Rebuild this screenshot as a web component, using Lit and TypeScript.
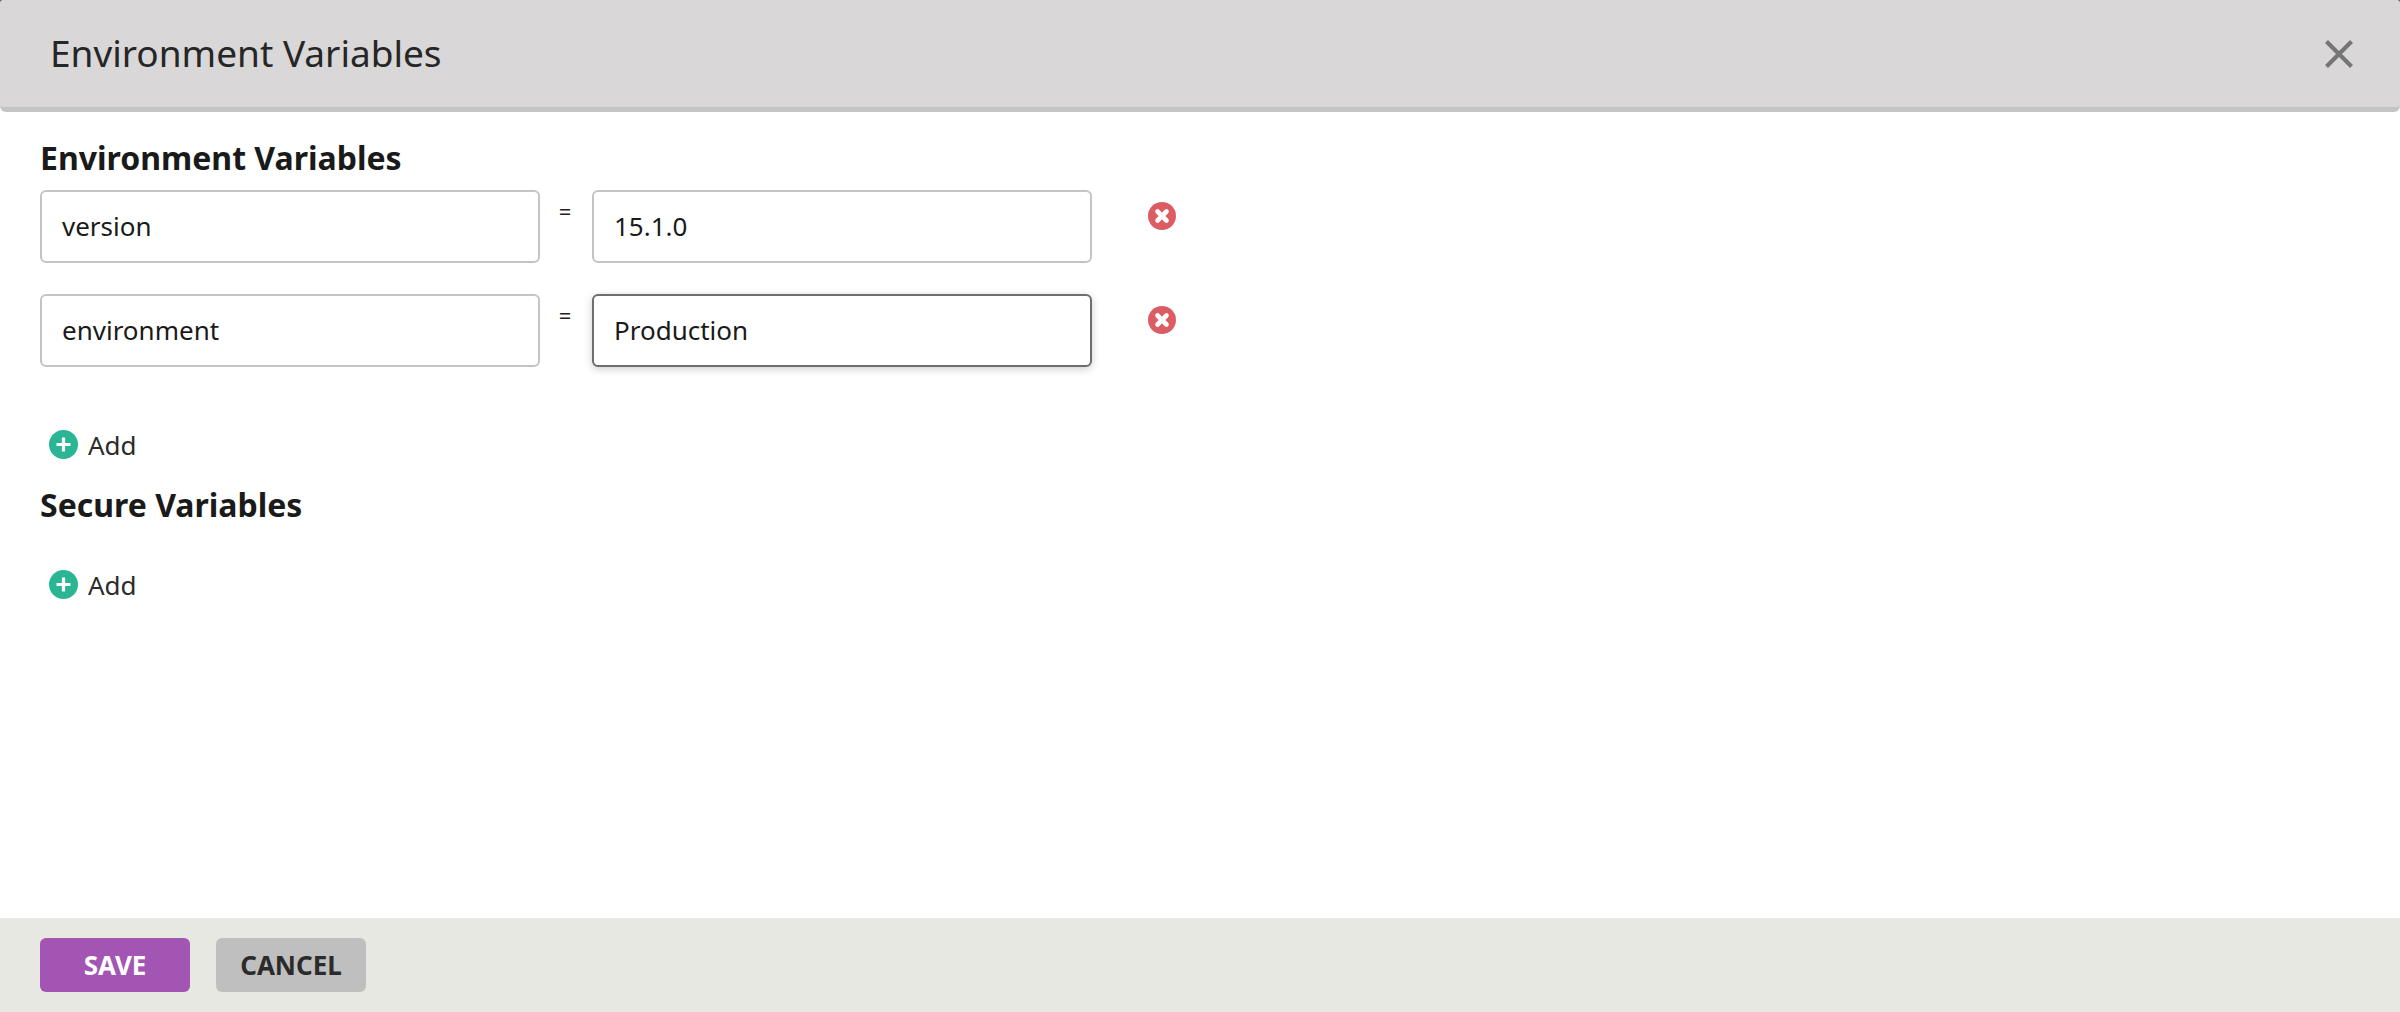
import { LitElement, html, css, svg } from "lit";
import { customElement } from "lit/decorators.js";

const closeIcon = svg`<svg class="close" viewBox="0 0 30 30" width="30" height="30"><path d="M2.5 2.5 L27.5 27.5 M27.5 2.5 L2.5 27.5" stroke="#757575" stroke-width="4.2" fill="none"/></svg>`;
const delIcon = svg`<svg class="del" viewBox="0 0 28 28" width="28" height="28"><circle cx="14" cy="14" r="14" fill="#dc5c63"/><path d="M9.5 9.5 L18.5 18.5 M18.5 9.5 L9.5 18.5" stroke="#fff" stroke-width="4.6" stroke-linecap="round" fill="none"/></svg>`;
const addIcon = svg`<svg viewBox="0 0 29 29" width="29" height="29"><circle cx="14.5" cy="14.5" r="14.5" fill="#2ab595"/><path d="M14.5 7.5 V21.5 M7.5 14.5 H21.5" stroke="#fff" stroke-width="3.2" fill="none"/></svg>`;

@customElement("app-root")
export class AppRoot extends LitElement {
  static styles = css`
    :host {
      display: flex;
      flex-direction: column;
      height: 1012px;
      background: #fff;
      font-family: "Noto Sans", "Open Sans", sans-serif;
      color: #1e1e1e;
    }
    .top {
      flex: none;
      background: linear-gradient(#555 50%, #fff 50%);
    }
    .header {
      box-sizing: border-box;
      height: 112px;
      display: flex;
      align-items: center;
      justify-content: space-between;
      padding: 1px 46px 0 50px;
      background: #d9d7d8;
      border-bottom: 5px solid #c4c4c4;
      border-radius: 3px 3px 6px 6px;
    }
    .title { font-size: 37px; font-weight: 400; color: #262626; margin: 0 0 3px; }
    .close { display: block; }
    .body {
      flex: 1;
      display: flex;
      flex-direction: column;
      padding: 25px 40px 0;
    }
    h2 {
      margin: 0;
      font-size: 32px;
      line-height: 42px;
      font-weight: 700;
      color: #1a1a1a;
    }
    .rows { display: flex; flex-direction: column; gap: 31px; margin-top: 11px; }
    .row { display: flex; align-items: flex-start; }
    .field {
      box-sizing: border-box;
      width: 500px;
      height: 73px;
      display: flex;
      align-items: center;
      padding: 0 20px 2px;
      border: 2px solid #c4c4c4;
      border-radius: 6px;
      font-size: 26px;
      color: #1a1a1a;
      background: #fff;
    }
    .field.focus {
      border-color: #6e6e6e;
      box-shadow: 0 2px 8px rgba(0, 0, 0, 0.2);
    }
    .eq {
      box-sizing: border-box;
      width: 52px;
      padding-right: 2px;
      text-align: center;
      font-size: 22px;
      line-height: 28px;
      margin-top: 7px;
      color: #222;
    }
    .del { margin: 12px 0 0 56px; display: block; }
    .add {
      display: flex;
      align-items: center;
      gap: 10px;
      padding-left: 9px;
      font-size: 26px;
      color: #2b2b2b;
      line-height: 36px;
    }
    .add svg { display: block; margin-top: -2px; }
    .add.first { margin-top: 60px; }
    .secure { margin-top: 21px; }
    .add.second { margin-top: 41px; }
    .footer {
      box-sizing: border-box;
      height: 94px;
      flex: none;
      display: flex;
      gap: 26px;
      padding: 20px 40px 0;
      background: #e8e8e3;
    }
    .btn {
      width: 150px;
      height: 54px;
      display: flex;
      align-items: center;
      justify-content: center;
      border-radius: 6px;
      font-size: 26px;
      font-weight: 700;
    }
    .save { background: #a355b3; color: #fff; }
    .cancel { background: #bfbfbf; color: #2b2b2b; }
  `;

  render() {
    return html`
      <div class="top">
        <div class="header">
          <h1 class="title">Environment Variables</h1>
          ${closeIcon}
        </div>
      </div>
      <div class="body">
        <h2>Environment Variables</h2>
        <div class="rows">
          <div class="row">
            <div class="field">version</div>
            <div class="eq">=</div>
            <div class="field">15.1.0</div>
            ${delIcon}
          </div>
          <div class="row">
            <div class="field">environment</div>
            <div class="eq">=</div>
            <div class="field focus">Production</div>
            ${delIcon}
          </div>
        </div>
        <div class="add first">${addIcon}<span>Add</span></div>
        <h2 class="secure">Secure Variables</h2>
        <div class="add second">${addIcon}<span>Add</span></div>
      </div>
      <div class="footer">
        <div class="btn save">SAVE</div>
        <div class="btn cancel">CANCEL</div>
      </div>
    `;
  }
}
